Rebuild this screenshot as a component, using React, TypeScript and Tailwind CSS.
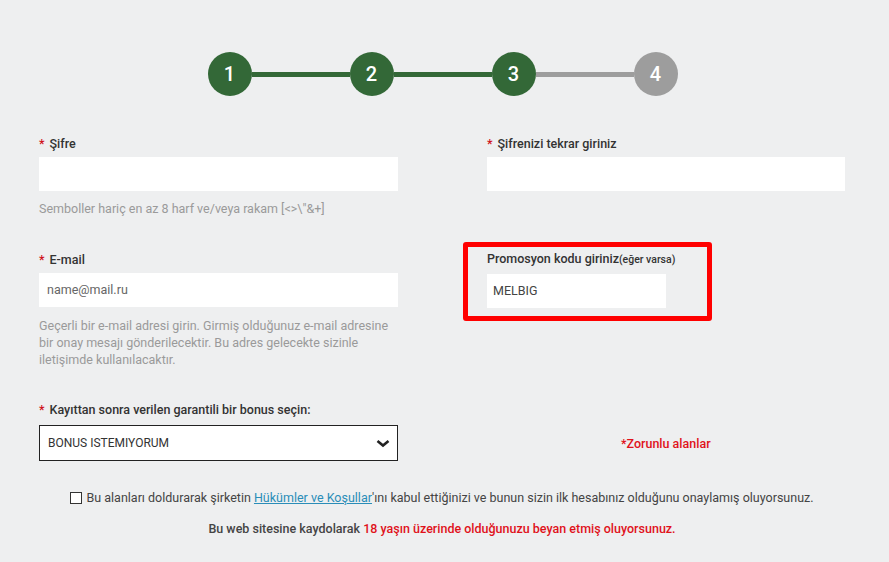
import React from "react";

function Step({ n, active }: { n: number; active: boolean }) {
  return (
    <div
      className={`w-[44px] h-[44px] rounded-full flex items-center justify-center text-white text-[20px] font-medium shrink-0 ${
        active ? "bg-[#336837]" : "bg-[#9d9d9d]"
      }`}
    >
      {n}
    </div>
  );
}

function Line({ active }: { active: boolean }) {
  return <div className={`h-[5px] w-[98px] ${active ? "bg-[#336837]" : "bg-[#9d9d9d]"}`} />;
}

function Label({ children, req = true }: { children: React.ReactNode; req?: boolean }) {
  return (
    <div className="text-[12.5px] leading-[16px] font-medium text-[#333]">
      {req && <span className="text-[#d0121b] mr-[5px]">*</span>}
      {children}
    </div>
  );
}

export default function App() {
  return (
    <div
      className="w-[889px] h-[562px] bg-[#eeeff0] overflow-hidden"
      style={{ fontFamily: "Roboto, 'Liberation Sans', sans-serif" }}
    >
      <div className="flex items-center justify-center pt-[52px] pr-[4px]">
        <Step n={1} active />
        <Line active />
        <Step n={2} active />
        <Line active />
        <Step n={3} active />
        <Line active={false} />
        <Step n={4} active={false} />
      </div>

      <div className="pl-[39px] pr-[44px] mt-[40px]">
        <div className="grid grid-cols-[359px_358px] gap-x-[89px]">
          <div>
            <Label>Şifre</Label>
            <div className="mt-[5px] h-[34px] bg-white" />
            <div className="mt-[9px] text-[12.5px] leading-[17px] text-[#9a9a9a]">
              Semboller hariç en az 8 harf ve/veya rakam [&lt;&gt;\"&amp;+]
            </div>
          </div>
          <div>
            <Label>Şifrenizi tekrar giriniz</Label>
            <div className="mt-[5px] h-[34px] bg-white" />
          </div>

          <div className="mt-[35px]">
            <Label>E-mail</Label>
            <div className="mt-[5px] h-[34px] bg-white flex items-center px-[8px] text-[12.5px] text-[#666]">
              name@mail.ru
            </div>
            <div className="mt-[10px] text-[12.5px] leading-[17px] text-[#9a9a9a]">
              Geçerli bir e-mail adresi girin. Girmiş olduğunuz e-mail adresine bir onay mesajı gönderilecektir. Bu
              adres gelecekte sizinle iletişimde kullanılacaktır.
            </div>
          </div>
          <div className="mt-[25px]">
            <div className="ml-[-24px] w-[249px] h-[79px] border-[5px] border-[#ff0000] rounded-[3px] pl-[19px] pt-[4px]">
              <div className="text-[12.5px] leading-[16px] font-medium text-[#333]">
                Promosyon kodu giriniz<span className="text-[10.5px]">(eğer varsa)</span>
              </div>
              <div className="mt-[6px] w-[179px] h-[34px] bg-white flex items-center px-[6px] text-[12.5px] text-[#444]">
                MELBIG
              </div>
            </div>
          </div>

          <div className="mt-[34px]">
            <Label>Kayıttan sonra verilen garantili bir bonus seçin:</Label>
            <div className="mt-[7px] h-[36px] bg-white border border-[#222] flex items-center justify-between pl-[8px] pr-[7px] text-[12px] text-[#333]">
              <span>BONUS ISTEMIYORUM</span>
              <svg width="14" height="9" viewBox="0 0 14 9" className="mt-[1px]">
                <path d="M1.5 2 L7 6.5 L12.5 2" fill="none" stroke="#222" strokeWidth="2.6" />
              </svg>
            </div>
          </div>
          <div className="mt-[34px] flex items-end pb-[9px]">
            <div className="ml-[134px] text-[12.5px] leading-[16px] font-medium text-[#e0121b]">*Zorunlu alanlar</div>
          </div>
        </div>
      </div>

      <div className="mt-[29px] flex items-center justify-center pr-[5px] text-[12.5px] leading-[16px] text-[#444]">
        <div className="w-[12px] h-[12px] border border-[#333] bg-white mr-[4px]" />
        <span>
          Bu alanları doldurarak şirketin{" "}
          <span className="text-[#2a8db8] underline">Hükümler ve Koşullar</span>'ını kabul ettiğinizi ve bunun sizin
          ilk hesabınız olduğunu onaylamış oluyorsunuz.
        </span>
      </div>
      <div className="mt-[15px] pr-[5px] text-center text-[12.5px] leading-[16px] font-medium text-[#444]">
        Bu web sitesine kaydolarak <span className="text-[#e0121b]">18 yaşın üzerinde olduğunuzu beyan etmiş oluyorsunuz.</span>
      </div>
    </div>
  );
}
